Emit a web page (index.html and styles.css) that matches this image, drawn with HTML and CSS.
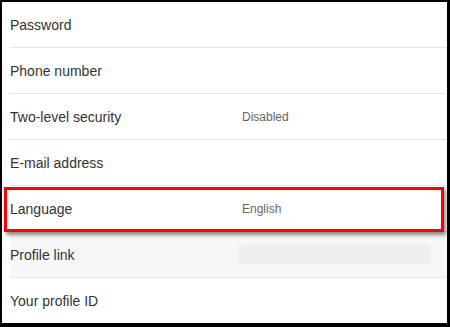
FILE: index.html
```html
<!DOCTYPE html>
<html>
<head>
<meta charset="utf-8">
<link rel="stylesheet" href="styles.css">
</head>
<body>
<div class="frame">
  <ul class="list">
    <li class="row"><span class="label">Password</span></li>
    <li class="row"><span class="label">Phone number</span></li>
    <li class="row"><span class="label">Two-level security</span><span class="value">Disabled</span></li>
    <li class="row"><span class="label">E-mail address</span></li>
    <li class="row"><span class="label">Language</span><span class="value">English</span></li>
    <li class="row row-grey"><span class="label">Profile link</span><span class="blur"></span></li>
    <li class="row row-last"><span class="label">Your profile ID</span></li>
  </ul>
  <div class="highlight"></div>
</div>
</body>
</html>
```

FILE: styles.css
```css
html, body {
  margin: 0;
  padding: 0;
  background: #000;
}
body {
  width: 450px;
  height: 327px;
  overflow: hidden;
  font-family: "Liberation Sans", Arial, sans-serif;
}
.frame {
  position: relative;
  box-sizing: border-box;
  width: 450px;
  height: 327px;
  border-style: solid;
  border-color: #000;
  border-width: 2px 3px 4px 2px;
  background: #fff;
  padding-left: 8px;
}
.list {
  list-style: none;
  margin: 0;
  padding: 0;
}
.row {
  display: flex;
  align-items: center;
  height: 45px;
  border-bottom: 1px solid #e6e6e6;
}
.row-last {
  border-bottom: none;
}
.row-grey {
  background: #f7f7f7;
}
.label {
  width: 232px;
  font-size: 14px;
  color: #333;
}
.value {
  font-size: 12px;
  color: #666;
}
.blur {
  width: 192px;
  height: 19px;
  margin-left: -4px;
  background: #eeeeee;
  border-radius: 2px;
  filter: blur(1px);
}
.highlight {
  position: absolute;
  left: 2px;
  top: 185px;
  width: 434px;
  height: 39px;
  border: 3px solid #ff0000;
  box-shadow: 2px 3px 4px rgba(0, 0, 0, 0.45);
}
```
